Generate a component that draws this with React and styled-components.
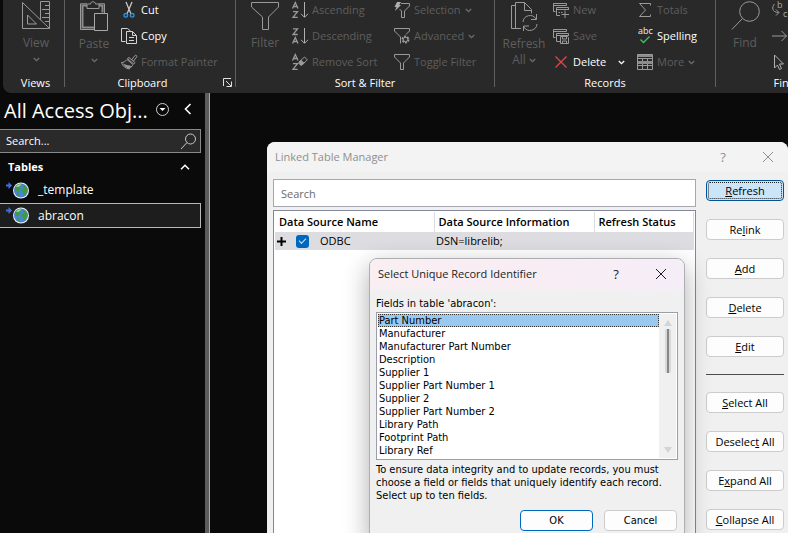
import React from "react";
import styled, { createGlobalStyle, css } from "styled-components";

const ui = `"Open Sans", "Noto Sans", sans-serif`;
const tahoma = `"DejaVu Sans Condensed", "DejaVu Sans", sans-serif`;

const GlobalStyle = createGlobalStyle`
  * { box-sizing: border-box; }
  body { margin: 0; background: #0a0a0a; overflow: hidden; }
  button, input, select { font: inherit; color: inherit; margin: 0; }
  button { background: none; border: 0; padding: 0; cursor: default; }
  svg { display: block; flex: none; overflow: visible; }
`;

const Desktop = styled.div`
  position: relative;
  display: flex;
  flex-direction: column;
  height: 100vh;
  overflow: hidden;
  background: #0a0a0a;
  color: #fff;
  font: 11px/16px ${ui};
`;

/* ---------- ribbon ---------- */
const Ribbon = styled.header`
  display: flex;
  flex: none;
  margin: -3px 0 0 3px;
  height: 96px;
  background: #292929;
  border-radius: 0 0 0 8px;
  overflow: hidden;
`;
const Group = styled.section`
  position: relative;
  display: flex;
  flex-direction: column;
  flex: none;
  width: ${(p) => p.$w}px;
  height: 90px;
  border-right: 1px solid #606060;
`;
const GroupBody = styled.div`
  display: flex;
  flex: none;
  gap: ${(p) => p.$gap ?? 1}px;
  height: 78px;
  padding-left: ${(p) => p.$pad ?? 3}px;
`;
const GroupLabel = styled.div`
  text-align: center;
  padding-right: ${(p) => (p.$launcher ? 15 : 0)}px;
  padding-left: ${(p) => p.$indent ?? 0}px;
`;
const Launcher = styled.button`
  position: absolute;
  right: 3px;
  bottom: 0;
`;
const BigButton = styled.button`
  display: flex;
  flex-direction: column;
  align-items: center;
  width: 52px;
  padding-top: 4px;
  color: #5e5e5e;
  font-size: 12px;
  line-height: 16px;
  svg + span { margin-top: 5px; }
`;
const Line = styled.span`
  display: flex;
  align-items: center;
  justify-content: center;
  gap: 3px;
  height: 16px;
`;
const Column = styled.div`
  display: flex;
  flex-direction: column;
  width: ${(p) => p.$w}px;
`;
const SmallButton = styled.button`
  display: flex;
  align-items: center;
  gap: 4px;
  height: 26px;
  white-space: nowrap;
  color: ${(p) => (p.$on ? "#fff" : "#5e5e5e")};
`;
const Spacer = styled.span`
  width: 4px;
`;

const Svg = ({ w = 16, h = 16, children, ...r }) => (
  <svg width={w} height={h} viewBox={`0 0 ${w} ${h}`} fill="none" stroke="#9a9a9a" strokeWidth="1" aria-hidden="true" {...r}>
    {children}
  </svg>
);
const Chevron = ({ bright }) => (
  <Svg w={7} h={5} stroke={bright ? "#fff" : "#6e6e6e"} strokeWidth="1.3">
    <path d="M.8 1 3.5 3.6 6.2 1" />
  </Svg>
);
const ViewIcon = () => (
  <Svg w={29} h={29}>
    <path d="M.5 1.5v26h27zM5.500 14v9h9zM18.500 19V.5h9v27M23 4.500h4.500M20 8.500h7.500M23 12.500h4.500M20 16.500h7.500M23 20.500h4.500" />
  </Svg>
);
const PasteIcon = () => (
  <Svg w={28} h={30}>
    <path d="M7 4.500H2.500v22H14M19 4.500h3.500v7" stroke="#8c8c8c" strokeWidth="2" />
    <path d="M.5 2.800H7v4.700h12V2.800h5.500V12M.5 2.800v25.700H14M7.500 3h3c0-3 5-3 5 0h3.500" />
    <path d="M14.500 12.500h13v17h-13z" fill="#292929" stroke="#a8a8a8" />
  </Svg>
);
const FilterBig = () => (
  <Svg w={28} h={29}>
    <path d="M.5 1.500h27v4.500L17.500 16v12.500h-6V16L.5 6z" />
  </Svg>
);
const RefreshIcon = () => (
  <Svg w={29} h={30}>
    <path d="M5.500 4.500H1.500v23h7M11 27.500H5.500V1.500h9l7 7v4M14.500 1.500v8h7" />
    <path d="M13 21a7 7 0 0 1 13-3M26.500 13v5.500H21M27 23a7 7 0 0 1-13 3M13.500 30v-5H19" />
  </Svg>
);
const FindIcon = () => (
  <Svg w={29} h={29}>
    <circle cx="18.500" cy="10.500" r="9.800" />
    <path d="M11.500 17.500.8 28.500" />
  </Svg>
);
const CutIcon = () => (
  <Svg>
    <path d="m5 0 5 12M11 0 6 12" stroke="#c8c8c8" strokeWidth="1.300" />
    <circle cx="4.800" cy="13.300" r="1.800" stroke="#2f8fd8" strokeWidth="1.400" />
    <circle cx="11.200" cy="13.300" r="1.800" stroke="#2f8fd8" strokeWidth="1.400" />
  </Svg>
);
const CopyIcon = () => (
  <Svg stroke="#d4d4d4">
    <path d="M4.500 13.500h-4V.5h6l3 2.500M5.500 3.500h6l4 4v8h-10zM11.500 3.500v4h4M8 9.500h5M8 12.500h5" />
  </Svg>
);
const PainterIcon = () => (
  <Svg>
    <path d="m10.500 6 3.300-4.300c1-1.200 2.700.2 1.800 1.500L12.500 7" />
    <path d="M6.500 4.500 8 3.500l6 5-1.300 1.500z" />
    <path d="M6 5.500C4.500 7.500 2.500 8.500.5 8.500c1 3.500 4 6 7.500 6.500 1.500-.8 3.200-2.800 4-4.500z" />
    <path d="M2 9.500c3 1.500 6 2 8.500 2.500L8 14.800C5.500 14 3 12 2 9.500z" fill="#9a9a9a" stroke="none" />
  </Svg>
);
const SortIcon = ({ down }) => (
  <Svg>
    <path d={down ? "M1 .8h4.500L1 6.500h4.700M.5 15.500 3.300 9.500 6 15.500M1.300 13.500h4" : "M.5 6.500 3.300.5 6 6.500M1.300 4.500h4M1 9.700h4.500L1 15.400h4.700"} strokeWidth="1.300" />
    <path d="M12.500 0v15M9 11.800l3.500 3.500 3.500-3.500" stroke="#b0b0b0" />
  </Svg>
);
const RemoveSortIcon = () => (
  <Svg>
    <path d="M.5 6.500 3.300.5 6 6.500M1.300 4.500h4M1 9.700h4.500L1 15.400h4.700" strokeWidth="1.300" />
    <path d="m7 8 5.500-5 2.800 2.800L10 11H8.500L7 9.500z" />
    <path d="m7 8 2-1.800 3 3L10 11H8.500z" fill="#9a9a9a" />
  </Svg>
);
const FunnelIcon = ({ kind }) => (
  <Svg>
    {kind === "flash" && (
      <>
        <path d="M7 1.500h8.500V4L10.500 9v6.500h-3V9L5.500 7" />
        <path d="M3 0h4L5.200 3H7L1 9l1.500-4H.5z" fill="#b0b0b0" stroke="none" />
      </>
    )}
    {kind === "gear" && (
      <>
        <path d="M6.500 15.500V9L.5 3V.5h15V3L12 6.500" />
        <circle cx="11.500" cy="11.500" r="3" strokeWidth="2" strokeDasharray="2 1.100" />
        <circle cx="11.500" cy="11.500" r="2.200" />
      </>
    )}
    {!kind && <path d="M.5.5h15V3L9.500 9v6.500h-3V9L.5 3z" />}
  </Svg>
);
const NewIcon = ({ save }) => (
  <Svg>
    <path d="M2.500 9.500h-2V1.500h13v2M.5 3.500h13M7 13.500H3.500v-8h12V8M3.500 7.500h12" />
    {save ? (
      <path d="M7.500 8.500h7l1 1v6h-8zM9.500 8.500v2.500h4V8.500M9.500 15.500V13h4v2.500" />
    ) : (
      <path d="M12 8.500v7.500M8.500 12.500H16M5.500 10.500h1.500M8 10.500h1.500" />
    )}
  </Svg>
);
const DeleteIcon = () => (
  <Svg stroke="#e0474c" strokeWidth="1.300">
    <path d="m2.500 2.500 11 11M13.500 2.500l-11 11" />
  </Svg>
);
const SigmaIcon = () => (
  <Svg>
    <path d="M13.500 3.500V1.500h-11L8.500 8l-6 6.500h11v-2" />
  </Svg>
);
const Glyph = styled.text`
  font: ${(p) => p.$size}px/1 ${ui};
  fill: ${(p) => p.$fill};
  stroke: none;
`;
const SpellIcon = () => (
  <Svg>
    <Glyph $size={9} $fill="#f0f0f0" x="1" y="6">abc</Glyph>
    <path d="m3.500 11.500 3 3 6-6" stroke="#3fbf63" strokeWidth="1.400" />
  </Svg>
);
const MoreIcon = () => (
  <Svg>
    <path d="M.5.5h15v15H.5zM.5 4.500h15M.5 8h15M.5 11.500h15M5.500 4.500v11M10.500 4.500v11" />
    <path d="M1 7h14v3H1zM1 1h14v2H1z" fill="#8c8c8c" stroke="none" />
  </Svg>
);
const ReplaceIcon = () => (
  <Svg>
    <Glyph $size={9} $fill="#a8a8a8" x="5" y="6">b</Glyph>
    <Glyph $size={9} $fill="#a8a8a8" x="11" y="15">c</Glyph>
    <path d="M2.500 2C-.5 5 0 10.500 6.500 10.500M4 7.500l3 3-3 3" />
  </Svg>
);
const GotoIcon = () => (
  <Svg>
    <path d="M0 8h14.500M9.500 3l5 5-5 5" />
  </Svg>
);
const PointerIcon = () => (
  <Svg stroke="#b0b0b0">
    <path d="M2.500 1v13l3-3 2 4.500 2-1-2-4.500h4z" />
  </Svg>
);

function RibbonBar() {
  return (
    <Ribbon>
      <Group $w={62}>
        <GroupBody $pad={7}>
          <BigButton>
            <ViewIcon />
            <Line>View</Line>
            <Line><Chevron /></Line>
          </BigButton>
        </GroupBody>
        <GroupLabel $indent={4}>Views</GroupLabel>
      </Group>
      <Group $w={171}>
        <GroupBody>
          <BigButton>
            <PasteIcon />
            <Line>Paste</Line>
            <Line><Chevron /></Line>
          </BigButton>
          <Column>
            <SmallButton $on><CutIcon />Cut</SmallButton>
            <SmallButton $on><CopyIcon />Copy</SmallButton>
            <SmallButton><PainterIcon />Format Painter</SmallButton>
          </Column>
        </GroupBody>
        <GroupLabel $launcher>Clipboard</GroupLabel>
        <Launcher aria-label="Clipboard options">
          <Svg w={9} h={9} stroke="#e0e0e0">
            <path d="M.5 8V.5H8M3 3l5 5M8.500 3.500v5h-5" />
          </Svg>
        </Launcher>
      </Group>
      <Group $w={259}>
        <GroupBody>
          <BigButton>
            <FilterBig />
            <Line>Filter</Line>
          </BigButton>
          <Column $w={101}>
            <SmallButton><SortIcon />Ascending</SmallButton>
            <SmallButton><SortIcon down />Descending</SmallButton>
            <SmallButton><RemoveSortIcon />Remove Sort</SmallButton>
          </Column>
          <Column>
            <SmallButton><FunnelIcon kind="flash" />Selection<Chevron /></SmallButton>
            <SmallButton><FunnelIcon kind="gear" />Advanced<Chevron /></SmallButton>
            <SmallButton><FunnelIcon />Toggle Filter</SmallButton>
          </Column>
        </GroupBody>
        <GroupLabel>Sort &amp; Filter</GroupLabel>
      </Group>
      <Group $w={221}>
        <GroupBody $gap={3}>
          <BigButton>
            <RefreshIcon />
            <Line>Refresh</Line>
            <Line>All<Chevron /></Line>
          </BigButton>
          <Column $w={81}>
            <SmallButton><NewIcon />New</SmallButton>
            <SmallButton><NewIcon save />Save</SmallButton>
            <SmallButton $on><DeleteIcon />Delete<Spacer /><Chevron bright /></SmallButton>
          </Column>
          <Column>
            <SmallButton><SigmaIcon />Totals</SmallButton>
            <SmallButton $on><SpellIcon />Spelling</SmallButton>
            <SmallButton><MoreIcon />More<Chevron /></SmallButton>
          </Column>
        </GroupBody>
        <GroupLabel>Records</GroupLabel>
      </Group>
      <Group $w={138}>
        <GroupBody>
          <BigButton>
            <FindIcon />
            <Line>Find</Line>
          </BigButton>
          <Column>
            <SmallButton aria-label="Replace"><ReplaceIcon /></SmallButton>
            <SmallButton aria-label="Go to"><GotoIcon /></SmallButton>
            <SmallButton aria-label="Select"><PointerIcon /></SmallButton>
          </Column>
        </GroupBody>
        <GroupLabel>Find</GroupLabel>
      </Group>
    </Ribbon>
  );
}

/* ---------- navigation pane ---------- */
const Pane = styled.nav`
  display: flex;
  flex-direction: column;
  flex: 1;
  width: 210px;
  padding-right: 8px;
  border-right: 1px solid #a8a8a8;
  box-shadow: inset -4px 0 #5c5c5c;
`;
const PaneHead = styled.div`
  display: flex;
  align-items: center;
  height: 36px;
  padding: 0 9px 0 4px;
`;
const PaneTitle = styled.h1`
  flex: 1;
  margin: 0;
  font: 400 20px/30px ${ui};
  white-space: nowrap;
  min-width: 0;
`;
const HeadTools = styled.div`
  display: flex;
  align-items: center;
  gap: 15px;
  padding-bottom: 4px;
`;
const PaneSearch = styled.label`
  display: flex;
  align-items: center;
  height: 24px;
  padding: 0 3px 0 6px;
  border: 1px solid #8a8a8a;
  border-left: 0;
  background: #2a2a2a;
  input {
    flex: 1;
    min-width: 0;
    padding: 0;
    border: 0;
    background: none;
  }
  input::placeholder { color: #fff; opacity: 1; }
`;
const Category = styled.button`
  display: flex;
  align-items: center;
  justify-content: space-between;
  height: 24px;
  padding: 4px 11px 0 8px;
  font-weight: 700;
`;
const TableItem = styled.button`
  display: flex;
  align-items: center;
  gap: 8px;
  height: ${(p) => (p.$selected ? 25 : 26)}px;
  padding-left: 6px;
  text-align: left;
  font-size: 12px;
  ${(p) => p.$selected && css`
    background: #1d1d1d;
    border: 1px solid #b8b8b8;
    border-left: 0;
  `}
`;
const GlobeIcon = () => (
  <Svg w={24} h={17} stroke="none">
    <path d="M0 2.500h2.500V0l3.700 3.500L2.500 7V4.500H0z" fill="#3f6fd8" />
    <circle cx="15" cy="8.500" r="8" fill="#f2f4f6" />
    <circle cx="15" cy="8.500" r="7" fill="#4a86cf" />
    <path d="M9 5c2-3 5-3.500 6-3 0 2-1 2-1 3.500 1.500 1 0 3-1.500 3.500S10 8 9 8zM17 3c3 .5 4.500 3 4.500 5.500-1 3-3 5-4 5-.5-2 0-3-1.500-4s1-3 2-3.500-1.500-1.500-1-3zM11 10.500c2 0 3 1.500 2 4-1-.5-2-2-2-4z" fill="#3f9a45" />
    <path d="M10 5c1.500-2.500 4-3 5-2.500-.5 1.500-3 3-5 2.500z" fill="#a7d9b0" />
  </Svg>
);

/* ---------- windows ---------- */
const Manager = styled.section`
  position: absolute;
  left: 267px;
  right: 0;
  top: 142px;
  bottom: 0;
  display: flex;
  flex-direction: column;
  background: #f0f0f0;
  color: #000;
  border-radius: 8px 8px 0 0;
  overflow: hidden;
`;
const TitleBar = styled.header`
  display: flex;
  align-items: center;
  flex: none;
  height: 30px;
  padding: 0 ${(p) => p.$end}px 0 8px;
  background: ${(p) => p.$bg};
  color: ${(p) => (p.$dim ? "#8f8f8f" : "#1c1c1c")};
  h2 { flex: 1; margin: 0; font: inherit; }
`;
const TitleButton = styled.button`
  width: 20px;
  margin-left: 25px;
  font-size: 13px;
  svg { margin: auto; }
`;
const ManagerBody = styled.div`
  display: flex;
  flex: 1;
  min-height: 0;
  gap: 10px;
  padding: 7px 3px 0 6px;
`;
const ListSide = styled.div`
  display: flex;
  flex-direction: column;
  flex: 1;
  gap: 3px;
`;
const ManagerSearch = styled.input`
  width: 100%;
  height: 28px;
  flex: none;
  padding: 0 7px;
  border: 1px solid #a5a8ae;
  border-radius: 0;
  background: #fff;
  &::placeholder { color: #6b6b6b; opacity: 1; }
`;
const TableFrame = styled.div`
  flex: 1;
  padding: 1px;
  border: 1px solid #82879b;
  border-bottom: 0;
  background: #fff;
`;
const SourceTable = styled.table`
  width: 100%;
  table-layout: fixed;
  border-collapse: collapse;
  th { height: 20px; padding: 0 4px; text-align: left; font-weight: 600; border-right: 1px solid #dcdcdc; white-space: nowrap; }
  td { height: 18px; padding: 0 2px; background: #dddde1; line-height: 18px; }
`;
const NameCell = styled.div`
  display: flex;
  align-items: center;
`;
const Check = styled.input`
  appearance: none;
  width: 13px;
  height: 13px;
  margin: 0 11px 0 10px;
  border-radius: 3px;
  background: #0067c0;
  display: grid;
  place-items: center;
  &::after {
    content: "";
    width: 6px;
    height: 3px;
    margin-bottom: 2px;
    border: solid #cfe6fa;
    border-width: 0 0 1px 1px;
    transform: rotate(-45deg);
  }
`;
const Actions = styled.div`
  display: flex;
  flex-direction: column;
  flex: none;
  width: 79px;
  gap: 17px;
  padding: 1px 1px 0 0;
`;
const ActionSet = styled.div`
  display: flex;
  flex-direction: column;
  flex: none;
  gap: 18px;
`;
const Rule = styled.hr`
  width: 100%;
  height: 1px;
  margin: 0;
  border: 0;
  background: #4c4c4c;
`;
const PushButton = styled.button`
  flex: none;
  height: 21px;
  line-height: 18px;
  border: 1px solid ${(p) => (p.$primary ? "#0067c0" : "#cccccc")};
  border-radius: 4px;
  background: ${(p) => (p.$focus ? "#cce4f7" : "#fdfdfd")};
  white-space: nowrap;
  ${(p) => p.$focus && css`
    border-color: #00549a;
    outline: 1px dotted #222;
    outline-offset: -3px;
  `}
`;
const Picker = styled.section`
  position: absolute;
  left: 369px;
  top: 258px;
  width: 316px;
  color: #000;
  background: #f0f0f0;
  border: 1px solid #adadb2;
  border-radius: 8px;
  overflow: hidden;
  box-shadow: 0 8px 26px rgba(0, 0, 0, 0.32);
  font: 11px/13px ${tahoma};
`;
const PickerTitle = styled(TitleBar)`
  font: 11px/16px ${ui};
`;
const PickerBody = styled.div`
  padding: 8px 6px 12px;
`;
const FieldLabel = styled.label`
  display: block;
  margin-bottom: 2px;
`;
const ListFrame = styled.div`
  display: flex;
  padding: 1px;
  border: 1px solid #9a9ea8;
  background: #fff;
`;
const FieldList = styled.select`
  flex: 1;
  height: 144px;
  padding: 0;
  border: 0;
  outline: 0;
  border-radius: 0;
  background: #fff;
  overflow: hidden;
  option {
    height: 13px;
    min-height: 13px;
    padding: 0 1px;
    line-height: 13px;
    color: #000;
  }
  option:checked {
    background: #99c9ef linear-gradient(#99c9ef, #99c9ef);
    color: #000;
    outline: 1px dotted #333;
    outline-offset: -1px;
  }
`;
const ScrollTrack = styled.div`
  display: flex;
  flex-direction: column;
  align-items: center;
  width: 17px;
  padding: 6px 0 5px;
  background: #f0f0f0;
`;
const ScrollThumb = styled.div`
  flex: none;
  width: 6px;
  height: 44px;
  margin: 3px 0 auto;
  border: solid #d8d8d8;
  border-width: 0 2px;
  border-radius: 2px;
  background: #868686;
`;
const Hint = styled.p`
  margin: 3px 0 8px;
  font: inherit;
`;
const Footer = styled.footer`
  display: flex;
  justify-content: flex-end;
  gap: 11px;
  padding-right: 1px;
  button { width: 73px; }
`;

const CloseIcon = () => (
  <Svg w={12} h={12} stroke="currentColor">
    <path d="m1 1 10 10M11 1 1 11" />
  </Svg>
);

const fields = ["Part Number", "Manufacturer", "Manufacturer Part Number", "Description", "Supplier 1", "Supplier Part Number 1", "Supplier 2", "Supplier Part Number 2", "Library Path", "Footprint Path", "Library Ref"];

export default function App() {
  return (
    <Desktop>
      <GlobalStyle />
      <RibbonBar />
      <Pane>
        <PaneHead>
          <PaneTitle>All Access Obj...</PaneTitle>
          <HeadTools>
            <button aria-label="Pane menu">
              <Svg w={13} h={13} stroke="#d0d0d0">
                <circle cx="6.500" cy="6.500" r="6" />
                <path d="M3.500 5h6l-3 3z" fill="#fff" stroke="none" />
              </Svg>
            </button>
            <button aria-label="Collapse pane">
              <Svg w={8} h={12} stroke="#fff" strokeWidth="1.600">
                <path d="M6.500 1 1.500 6l5 5" />
              </Svg>
            </button>
          </HeadTools>
        </PaneHead>
        <PaneSearch>
          <input placeholder="Search..." aria-label="Search objects" />
          <Svg w={17} h={17} stroke="#c8c8c8">
            <circle cx="10.500" cy="6" r="5" />
            <path d="M7 9.500 1 16" />
          </Svg>
        </PaneSearch>
        <Category>
          Tables
          <Svg w={10} h={6} stroke="#fff" strokeWidth="1.500">
            <path d="m1 5.200 4-4 4 4" />
          </Svg>
        </Category>
        <TableItem><GlobeIcon />_template</TableItem>
        <TableItem $selected><GlobeIcon />abracon</TableItem>
      </Pane>

      <Manager aria-label="Linked Table Manager">
        <TitleBar $dim $bg="#f3f3f3" $end={10}>
          <h2>Linked Table Manager</h2>
          <TitleButton aria-label="Help">?</TitleButton>
          <TitleButton aria-label="Close"><CloseIcon /></TitleButton>
        </TitleBar>
        <ManagerBody>
          <ListSide>
            <ManagerSearch placeholder="Search" aria-label="Search" />
            <TableFrame>
              <SourceTable>
                <colgroup>
                  <col width="159" />
                  <col width="160" />
                  <col />
                </colgroup>
                <thead>
                  <tr>
                    <th>Data Source Name</th>
                    <th>Data Source Information</th>
                    <th>Refresh Status</th>
                  </tr>
                </thead>
                <tbody>
                  <tr>
                    <td>
                      <NameCell>
                        <button aria-label="Expand ODBC">
                          <Svg w={9} h={9} stroke="#000" strokeWidth="2"><path d="M4.500 0v9M0 4.500h9" /></Svg>
                        </button>
                        <Check type="checkbox" id="odbc" defaultChecked />
                        <label htmlFor="odbc">ODBC</label>
                      </NameCell>
                    </td>
                    <td>DSN=librelib;</td>
                    <td />
                  </tr>
                </tbody>
              </SourceTable>
            </TableFrame>
          </ListSide>
          <Actions>
            <ActionSet>
              <PushButton $focus><u>R</u>efresh</PushButton>
              <PushButton>Re<u>l</u>ink</PushButton>
              <PushButton><u>A</u>dd</PushButton>
              <PushButton><u>D</u>elete</PushButton>
              <PushButton><u>E</u>dit</PushButton>
            </ActionSet>
            <Rule />
            <ActionSet>
              <PushButton><u>S</u>elect All</PushButton>
              <PushButton>Deselec<u>t</u> All</PushButton>
              <PushButton>E<u>x</u>pand All</PushButton>
              <PushButton><u>C</u>ollapse All</PushButton>
            </ActionSet>
          </Actions>
        </ManagerBody>
      </Manager>

      <Picker aria-label="Select Unique Record Identifier">
        <PickerTitle $bg="linear-gradient(90deg, #f9eef1, #f8edf4 60%, #f5eef8)" $end={13}>
          <h2>Select Unique Record Identifier</h2>
          <TitleButton aria-label="Help">?</TitleButton>
          <TitleButton aria-label="Close"><CloseIcon /></TitleButton>
        </PickerTitle>
        <PickerBody>
          <FieldLabel htmlFor="fields">Fields in table 'abracon':</FieldLabel>
          <ListFrame>
            <FieldList id="fields" size={11} defaultValue="Part Number">
              {fields.map((f) => <option key={f}>{f}</option>)}
            </FieldList>
            <ScrollTrack>
              <Svg w={8} h={6} stroke="none"><path d="m4 0 4 6H0z" fill="#d4d4d4" /></Svg>
              <ScrollThumb />
              <Svg w={8} h={6} stroke="none"><path d="m4 6 4-6H0z" fill="#d4d4d4" /></Svg>
            </ScrollTrack>
          </ListFrame>
          <Hint>
            To ensure data integrity and to update records, you must choose a field or fields that uniquely identify each record. Select up to ten fields.
          </Hint>
          <Footer>
            <PushButton $primary>OK</PushButton>
            <PushButton>Cancel</PushButton>
          </Footer>
        </PickerBody>
      </Picker>
    </Desktop>
  );
}
